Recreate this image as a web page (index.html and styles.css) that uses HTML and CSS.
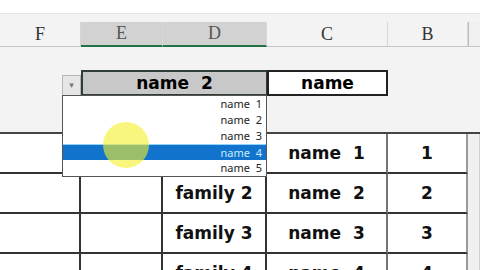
FILE: index.html
```html
<!DOCTYPE html>
<html lang="en">
<head>
  <meta charset="UTF-8">
  <meta name="viewport" content="width=device-width, initial-scale=1.0">
  <title>Filter list</title>
  <link rel="stylesheet" href="styles.css">
</head>
<body>
  <div class="topbar"></div>

  <!-- Column headers -->
  <div class="cols">
    <div class="col">F</div>
    <div class="col selected">E</div>
    <div class="col selected">D</div>
    <div class="col">C</div>
    <div class="col">B</div>
    <div class="col scroll"></div>
  </div>

  <!-- Filter row -->
  <div class="filter">
    <div></div>
    <div class="merged">name&nbsp;&nbsp;2</div>
    <div class="title">name</div>
  </div>

  <!-- Data rows -->
  <div class="grid">
    <div class="cell"></div><div class="cell"></div><div class="cell"></div>
    <div class="cell">name&nbsp;&nbsp;1</div><div class="cell">1</div><div class="scroll"></div>

    <div class="cell"></div><div class="cell"></div><div class="cell">family&nbsp;2</div>
    <div class="cell">name&nbsp;&nbsp;2</div><div class="cell">2</div><div class="scroll"></div>

    <div class="cell"></div><div class="cell"></div><div class="cell">family&nbsp;3</div>
    <div class="cell">name&nbsp;&nbsp;3</div><div class="cell">3</div><div class="scroll"></div>

    <div class="cell"></div><div class="cell"></div><div class="cell">family&nbsp;4</div>
    <div class="cell">name&nbsp;&nbsp;4</div><div class="cell">4</div><div class="scroll"></div>
  </div>

  <!-- Dropdown overlay -->
  <div class="drop-btn">&#9662;</div>
  <ul class="dropdown">
    <li>name&nbsp;&nbsp;1</li>
    <li>name&nbsp;&nbsp;2</li>
    <li>name&nbsp;&nbsp;3</li>
    <li class="active">name&nbsp;&nbsp;4</li>
    <li>name&nbsp;&nbsp;5</li>
  </ul>
  <div class="cursor"></div>
</body>
</html>
```

FILE: styles.css
```css
body {
  margin: 0;
  width: 480px;
  height: 270px;
  overflow: hidden;
  position: relative;
  background-color: #f3f3f3;
  font-family: "DejaVu Sans", Verdana, sans-serif;
}

.topbar {
  height: 13px;
  background-color: #ffffff;
  border-bottom: 1px solid #e4e4e4;
}

.cols, .filter, .grid {
  display: grid;
  grid-template-columns: 81px 82px 104px 121px 80px 12px;
}

.cols {
  margin-top: 8px;
  height: 24px;
  border-bottom: 1px solid #c6c6c6;
}

.col {
  display: flex;
  align-items: center;
  justify-content: center;
  font-family: "Liberation Serif", "DejaVu Serif", serif;
  font-size: 18px;
  color: #333;
  border-right: 1px solid #d6d6d6;
  background-color: #f3f3f3;
}

.col.selected {
  background-color: #d2d2d2;
  color: #555;
  border-bottom: 2px solid #217346;
  margin-bottom: -1px;
}

.col.scroll {
  border-right: none;
  border-left: 1px solid #bbb;
}

.filter {
  margin-top: 23px;
  height: 26px;
}

.merged {
  grid-column: 2 / 4;
  background-color: #c8c8c8;
  border: 2px solid #2f3f36;
  border-right-width: 1px;
  display: flex;
  align-items: center;
  justify-content: center;
  font-weight: bold;
  font-size: 17px;
}

.title {
  background-color: #ffffff;
  border: 2px solid #222;
  display: flex;
  align-items: center;
  justify-content: center;
  font-weight: bold;
  font-size: 17px;
}

.grid {
  margin-top: 36px;
  grid-auto-rows: 40px;
  border-top: 2px solid #444;
}

.cell {
  background-color: #ffffff;
  border-right: 2px solid #333;
  border-bottom: 2px solid #333;
  display: flex;
  align-items: center;
  justify-content: center;
  font-weight: bold;
  font-size: 17px;
  color: #111;
}

.cell:nth-child(6n+4) {
  border-right-color: #777;
}

.cell:nth-child(6n+5) {
  border-right-color: #999;
}

.scroll {
  background-color: #f0f0f0;
  border-right: 1px solid #d0d0d0;
}

.drop-btn {
  position: absolute;
  left: 62px;
  top: 75px;
  width: 17px;
  height: 19px;
  background-color: #e6e6e6;
  border: 1px solid #b5b5b5;
  color: #777;
  font-size: 9px;
  text-align: center;
  line-height: 19px;
}

.dropdown {
  position: absolute;
  left: 62px;
  top: 95px;
  width: 203px;
  margin: 0;
  padding: 0;
  list-style: none;
  background-color: #ffffff;
  border: 1px solid #555;
  font-family: "Noto Sans", sans-serif;
  font-size: 11px;
  color: #222;
}

.dropdown li {
  height: 16px;
  line-height: 16px;
  text-align: right;
  padding-right: 4px;
}

.dropdown li.active {
  background-color: #1273cc;
  color: #c9ecff;
  border-top: 1px solid #8fd4ff;
  height: 15px;
  line-height: 15px;
}

.cursor {
  position: absolute;
  left: 103px;
  top: 122px;
  width: 46px;
  height: 46px;
  border-radius: 50%;
  background-color: rgba(245, 240, 40, 0.6);
}
```
